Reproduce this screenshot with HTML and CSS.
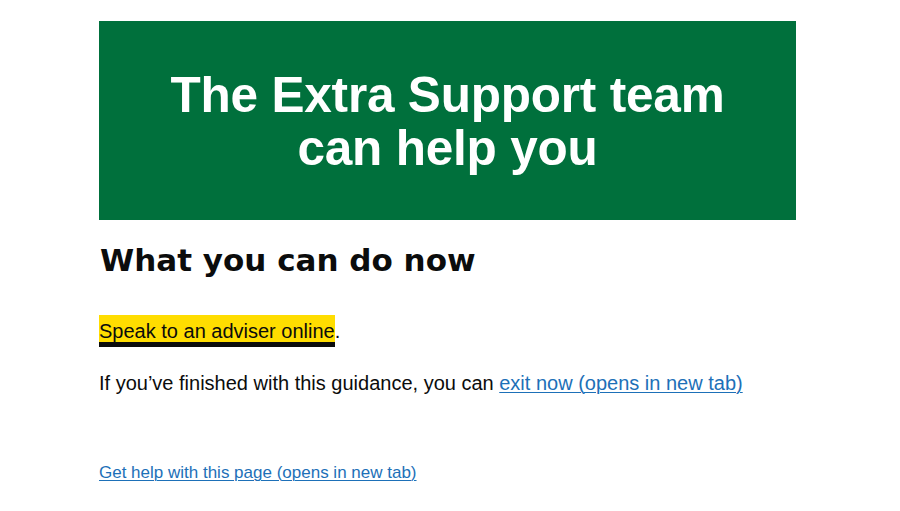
FILE: index.html
```html
<!DOCTYPE html>
<html lang="en">
<head>
<meta charset="utf-8">
<title>The Extra Support team can help you</title>
<link rel="stylesheet" href="styles.css">
</head>
<body>
<main class="page">
  <div class="panel">
    <h1 class="panel-title">The Extra Support team<br>can help you</h1>
  </div>
  <h2 class="heading">What you can do now</h2>
  <p class="body speak"><a class="link link-focus" href="#">Speak to an adviser online</a>.</p>
  <p class="body exit">If you’ve finished with this guidance, you can <a class="link" href="#">exit now (opens in new tab)</a></p>
  <p class="help"><a class="link" href="#">Get help with this page (opens in new tab)</a></p>
</main>
</body>
</html>
```

FILE: styles.css
```css
html, body {
  margin: 0;
  padding: 0;
  background: #ffffff;
}

body {
  font-family: "Liberation Sans", Arial, sans-serif;
  color: #0b0c0c;
}

.page {
  width: 697px;
  margin-left: 99px;
  padding-top: 21px;
}

.panel {
  background: #00703c;
  height: 199px;
  box-sizing: border-box;
  padding-top: 47px;
  text-align: center;
}

.panel-title {
  margin: 0;
  color: #ffffff;
  font-size: 49.5px;
  line-height: 53px;
  font-weight: 700;
  letter-spacing: -0.2px;
}

.heading {
  margin: 22px 0 0 1px;
  font-family: "DejaVu Sans", "Liberation Sans", sans-serif;
  font-size: 31px;
  line-height: 36px;
  font-weight: 700;
  letter-spacing: 0;
}

.body {
  margin: 0;
  font-size: 20px;
  line-height: 26px;
}

.speak {
  margin-top: 40px;
}

.exit {
  margin-top: 26px;
}

.link {
  color: #1d70b8;
  text-decoration: underline;
  text-decoration-thickness: 1px;
  text-underline-offset: 2px;
}

.link-focus {
  color: #0b0c0c;
  background: #ffdd00;
  text-decoration: none;
  box-shadow: 0 -5px #ffdd00, 0 5px #0b0c0c;
}

.help {
  margin: 66px 0 0;
  font-size: 17px;
  line-height: 22px;
}
```
